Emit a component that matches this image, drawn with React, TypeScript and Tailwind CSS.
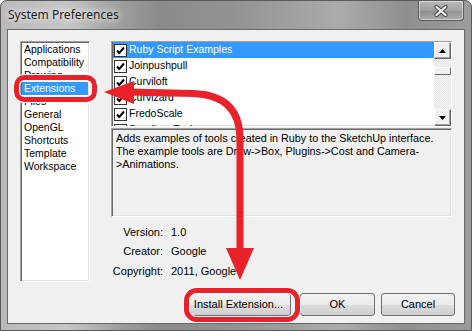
import { FC } from 'react';

const categories = [
  'Applications',
  'Compatibility',
  'Drawing',
  'Extensions',
  'Files',
  'General',
  'OpenGL',
  'Shortcuts',
  'Template',
  'Workspace',
];

const extensions = ['Ruby Script Examples', 'Joinpushpull', 'Curviloft', 'Curvizard', 'FredoScale', 'Sandbox Tools'];

const sunken =
  'border border-t-[#a0a0a0] border-l-[#a0a0a0] border-r-[#ffffff] border-b-[#ffffff] shadow-[inset_1px_1px_0_#696969,inset_-1px_-1px_0_#e3e3e3]';

const btn =
  'h-[23px] flex items-center justify-center rounded-[3px] border border-[#707070] bg-[linear-gradient(to_bottom,#f2f2f2_0%,#ebebeb_50%,#dddddd_51%,#cfcfcf_100%)] text-[11px] text-black';

const Check: FC = () => (
  <span className="w-[13px] h-[13px] shrink-0 bg-white border border-[#333] flex items-center justify-center">
    <svg width="11" height="11" viewBox="0 0 11 11">
      <path d="M2 5.5 L4.3 8 L9 2.5" fill="none" stroke="#000" strokeWidth="2" />
    </svg>
  </span>
);

const ScrollBtn: FC<{ up?: boolean }> = ({ up }) => (
  <div className="w-[17px] h-[17px] bg-[#f0f0f0] border border-t-white border-l-white border-r-[#696969] border-b-[#696969] shadow-[inset_-1px_-1px_0_#a0a0a0] flex items-center justify-center">
    <svg width="7" height="4" viewBox="0 0 7 4">
      <path d={up ? 'M0 4 L3.5 0 L7 4 Z' : 'M0 0 L3.5 4 L7 0 Z'} fill="#000" />
    </svg>
  </div>
);

const Annotations: FC = () => (
  <svg className="absolute inset-0 pointer-events-none" width="472" height="331" viewBox="0 0 472 331">
    <g fill="none" strokeLinecap="round">
      <rect x="15.5" y="76.5" width="78" height="22" rx="8" stroke="#fff" strokeWidth="7" />
      <rect x="15.5" y="76.5" width="78" height="22" rx="8" stroke="#e8212a" strokeWidth="5" />
      <rect x="185.5" y="289.5" width="111" height="29" rx="10" stroke="#fff" strokeWidth="7" />
      <rect x="185.5" y="289.5" width="111" height="29" rx="10" stroke="#e8212a" strokeWidth="5" />
      <path d="M128 91 L192 92.5 Q239 94 239 138 L239 252" stroke="#e8212a" strokeWidth="7" strokeLinecap="butt" />
    </g>
    <polygon points="103,91 133,80 133,103" fill="#e8212a" />
    <polygon points="225,247 253,247 239,279" fill="#e8212a" />
  </svg>
);

export default function App() {
  return (
    <div className="relative w-[472px] h-[331px] overflow-hidden rounded-t-[7px] border border-[#5a5a5a] bg-[linear-gradient(to_right,#b9b9b9_0%,#c6c6c6_14%,#a2a2a2_24%,#8a8a8a_34%,#939393_50%,#ababab_72%,#8f8f8f_86%,#9c9c9c_100%)] font-['Liberation_Sans',Arial,sans-serif]">
      <div className="h-[28px] flex items-start justify-between">
        <span className="mt-[6px] ml-[7px] text-[12px] leading-[16px] text-[#1b1b1b] font-['Noto_Sans',sans-serif] [text-shadow:0_0_6px_#fff,0_0_10px_rgba(255,255,255,0.8)]">
          System Preferences
        </span>
        <div className="mr-[7px] w-[46px] h-[20px] rounded-b-[4px] border border-t-0 border-[#5c5c5c] shadow-[inset_0_0_0_1px_rgba(255,255,255,0.45)] bg-[linear-gradient(to_bottom,rgba(255,255,255,0.35),rgba(255,255,255,0.1)_50%,rgba(0,0,0,0.05)_51%,rgba(255,255,255,0.2))] flex items-center justify-center">
          <svg width="14" height="12" viewBox="0 0 14 12">
            <path d="M2.5 2 L11.5 10 M11.5 2 L2.5 10" stroke="#4a4a4a" strokeWidth="4.2" strokeLinecap="round" />
            <path d="M2.5 2 L11.5 10 M11.5 2 L2.5 10" stroke="#f4f4f4" strokeWidth="2.2" strokeLinecap="round" />
          </svg>
        </div>
      </div>

      <div className="ml-[6px] w-[458px] h-[295px] bg-[#f0f0f0] border border-[#6a6a6a] pt-[11px] pl-[12px]">
        <div className="flex">
          <div className={`w-[70px] h-[241px] bg-white p-[1px] ${sunken}`}>
            {categories.map((c) => (
              <div
                key={c}
                className={`h-[13px] leading-[13px] pl-[2px] text-[10.5px] ${
                  c === 'Extensions' ? 'bg-[#3399ff] text-white' : 'text-black'
                }`}
              >
                {c}
              </div>
            ))}
          </div>

          <div className="ml-[21px] w-[341px] flex flex-col">
            <div className={`h-[86px] bg-white flex overflow-hidden ${sunken}`}>
              <div className="flex-1 pl-[1px] overflow-hidden">
                {extensions.map((e, i) => (
                  <div
                    key={e}
                    className={`h-[16px] flex items-center gap-[1px] pl-[1px] text-[10.5px] ${
                      i === 0 ? 'bg-[#3399ff] text-white' : 'text-black'
                    }`}
                  >
                    <Check />
                    <span className="pl-[1px]">{e}</span>
                  </div>
                ))}
              </div>
              <div className="w-[17px] flex flex-col bg-[repeating-conic-gradient(#f4f4f4_0_25%,#e6e6e6_0_50%)] bg-[length:2px_2px]">
                <ScrollBtn up />
                <div className="mt-[8px] h-[8px] bg-[#f0f0f0] border border-t-white border-l-white border-r-[#696969] border-b-[#696969]" />
                <div className="flex-1" />
                <ScrollBtn />
              </div>
            </div>

            <div className={`mt-[1px] h-[89px] bg-[#f0f0f0] pt-[3px] pl-[4px] text-[10.8px] leading-[13px] text-black whitespace-nowrap ${sunken}`}>
              <div>Adds examples of tools created in Ruby to the SketchUp interface.</div>
              <div>The example tools are Draw-&gt;Box, Plugins-&gt;Cost and Camera-</div>
              <div>&gt;Animations.</div>
            </div>

            <div className="mt-[5px] text-[11px] text-black">
              {[
                ['Version:', '1.0'],
                ['Creator:', 'Google'],
                ['Copyright:', '2011, Google'],
              ].map(([k, v]) => (
                <div key={k} className="h-[19.5px] flex items-center">
                  <span className="w-[52px] text-right">{k}</span>
                  <span className="ml-[8px]">{v}</span>
                </div>
              ))}
            </div>
          </div>
        </div>

        <div className="mt-[11px] flex justify-end pr-[9px]">
          <div className={`${btn} w-[105px]`}>Install Extension...</div>
          <div className={`${btn} ml-[9px] w-[75px]`}>OK</div>
          <div className={`${btn} ml-[6px] w-[74px]`}>Cancel</div>
        </div>
      </div>

      <Annotations />
    </div>
  );
}
